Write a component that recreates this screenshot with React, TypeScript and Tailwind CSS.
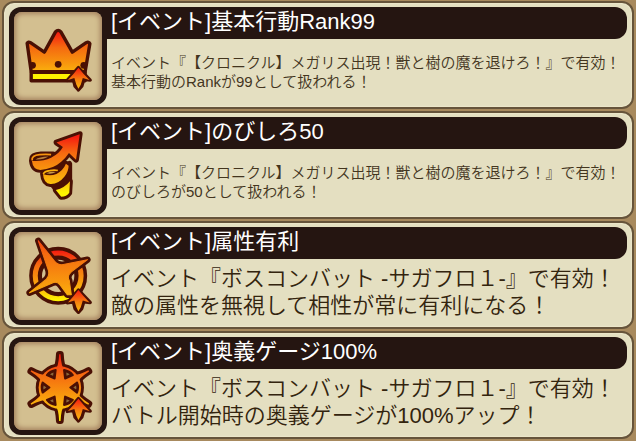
import type { ReactNode } from "react";

const INK = "#4a1004";

function Gradient({ id, y1, y2 }: { id: string; y1: number; y2: number }) {
  return (
    <linearGradient id={id} gradientUnits="userSpaceOnUse" x1="0" y1={y1} x2="0" y2={y2}>
      <stop offset="0" stopColor="#f51a10" />
      <stop offset="0.3" stopColor="#f56a10" />
      <stop offset="0.6" stopColor="#f8960e" />
      <stop offset="0.8" stopColor="#fbb80c" />
      <stop offset="1" stopColor="#fff200" />
    </linearGradient>
  );
}

function UpMark({ id, dy }: { id: string; dy: number }) {
  return (
    <g transform={`translate(0 ${dy})`}>
      <linearGradient id={id} x1="0" y1="0" x2="0" y2="1">
        <stop offset="0" stopColor="#f51a10" />
        <stop offset="0.6" stopColor="#f8860e" />
        <stop offset="1" stopColor="#fbb80c" />
      </linearGradient>
      <path
        d="M233 201 L268 238 L249 236 L243 256 L233 267 L223 256 L218 236 L200 239Z"
        fill={INK}
        stroke={INK}
        strokeWidth="10"
        strokeLinejoin="round"
      />
      <path
        d="M233 201 L248 219 L266 238 L246 232 L240 252 L233 264 L227 252 L221 232 L202 238 L219 219Z"
        fill={`url(#${id})`}
      />
    </g>
  );
}

function CrownIcon() {
  return (
    <svg viewBox="42 36 261 261" className="size-full" aria-hidden="true">
      <Gradient id="crown" y1={95} y2={250} />
      <g stroke={INK} strokeWidth="10" strokeLinejoin="round">
        <path
          d="M81 129 Q84 123 91 127 L132 155 L165 95 Q173 86 181 95 L215 155 L256 127 Q264 123 267 130 L253 213 L93 213Z"
          fill="url(#crown)"
        />
        <path d="M93 215 H253 V240 H93Z" fill="#fff200" />
      </g>
      <circle cx="173" cy="191" r="10" fill={INK} />
      <circle cx="97" cy="194" r="10" fill={INK} />
      <circle cx="249" cy="194" r="10" fill={INK} />
      <UpMark id="crownMark" dy={0} />
    </svg>
  );
}

function SpiralIcon() {
  const arrow =
    "M35 121 Q38 148 60 148 Q98 146 122 124 Q136 112 145 98 L166 118 L177 42 L108 67 L127 80 Q118 98 92 112 Q66 124 35 121Z";
  const band =
    "M68 160 Q70 188 90 190 Q114 191 132 168 Q144 152 144 136 L136 130 Q128 150 108 160 Q88 168 68 160Z";
  const tail = "M106 208 Q132 202 148 182 L146 216 Q138 228 122 228Z";
  return (
    <svg viewBox="-18 6 261 261" className="size-full" aria-hidden="true">
      <Gradient id="spiral" y1={48} y2={215} />
      <g fill={INK} stroke={INK} strokeWidth="17" strokeLinejoin="round">
        <path d={arrow} />
        <path d={band} />
        <path d={tail} />
        <path d="M36 118 Q34 104 62 102 L98 102 L70 118Z" />
        <path d="M70 158 L106 148 L146 130 L146 190 L110 208Z" />
      </g>
      <path d="M36 120 Q33 105 58 103 Q78 101 92 103" fill="none" stroke="#f8960e" strokeWidth="5" />
      <path d="M69 160 Q72 152 88 150 Q102 147 112 150" fill="none" stroke="#fbb00c" strokeWidth="5" />
      <path d="M46 117 Q56 109 84 108 Q70 118 46 117Z" fill="#b8803c" />
      <path d="M78 158 Q90 153 106 154 Q94 162 78 158Z" fill="#c89a48" />
      <g fill="url(#spiral)">
        <path d={arrow} />
        <path d={band} />
        <path d={tail} />
      </g>
    </svg>
  );
}

function ElementIcon() {
  const blade =
    "M54 32 L102 92 Q112 106 132 102 L200 88 L152 124 Q138 136 146 150 L152 192 L140 192 L118 162 Q108 150 94 158 L28 186 L78 146 Q90 134 82 114Z";
  return (
    <svg viewBox="-18 6 261 261" className="size-full" aria-hidden="true">
      <Gradient id="ring" y1={60} y2={206} />
      <Gradient id="blade" y1={-10} y2={260} />
      <circle cx="113" cy="136" r="67" fill="none" stroke={INK} strokeWidth="38" />
      <circle cx="113" cy="136" r="68" fill="none" stroke="url(#ring)" strokeWidth="15" />
      <path d={blade} fill={INK} stroke={INK} strokeWidth="19" strokeLinejoin="round" />
      <path d={blade} fill="url(#blade)" stroke="url(#blade)" strokeWidth="3" strokeLinejoin="round" />
      <g transform="translate(-60 -36)">
        <UpMark id="elementMark" dy={13} />
      </g>
    </svg>
  );
}

function ArtsIcon() {
  const spokes = [0, 60, 120, 180, 240, 300];
  const wedges = [30, 90, 150, 210, 270, 330];
  const spoke = "M164 124 Q174 116 176 78 L180 78 Q182 116 192 124Z";
  return (
    <svg viewBox="42 42 261 261" className="size-full" aria-hidden="true">
      <Gradient id="arts" y1={80} y2={275} />
      <mask id="artsShape" maskUnits="userSpaceOnUse" x="42" y="42" width="261" height="261">
        <circle cx="178" cy="177" r="63" fill="white" />
        {spokes.map((a) => (
          <path key={a} d={spoke} fill="white" transform={`rotate(${a} 178 177)`} />
        ))}
      </mask>
      <g fill={INK} stroke={INK} strokeLinejoin="round">
        <circle cx="178" cy="177" r="63" strokeWidth="17" />
        {spokes.map((a) => (
          <path key={a} d={spoke} strokeWidth="19" transform={`rotate(${a} 178 177)`} />
        ))}
      </g>
      <rect x="42" y="42" width="261" height="261" fill="url(#arts)" mask="url(#artsShape)" />
      {wedges.map((a) => (
        <g key={a} transform={`rotate(${a} 178 177)`}>
          <path
            d="M178 146 L193 126 Q178 120 163 126Z"
            fill={INK}
            stroke={INK}
            strokeWidth="6"
            strokeLinejoin="round"
          />
          <path d="M178 137 L184 129 Q178 127 172 129Z" fill="#8a6a3c" />
        </g>
      ))}
      <UpMark id="artsMark" dy={9} />
    </svg>
  );
}

type Ability = {
  title: string;
  lines: string[];
  large: boolean;
  icon: ReactNode;
};

const abilities: Ability[] = [
  {
    title: "[イベント]基本行動Rank99",
    lines: [
      "イベント『【クロニクル】メガリス出現！獣と樹の魔を退けろ！』で有効！",
      "基本行動のRankが99として扱われる！",
    ],
    large: false,
    icon: <CrownIcon />,
  },
  {
    title: "[イベント]のびしろ50",
    lines: [
      "イベント『【クロニクル】メガリス出現！獣と樹の魔を退けろ！』で有効！",
      "のびしろが50として扱われる！",
    ],
    large: false,
    icon: <SpiralIcon />,
  },
  {
    title: "[イベント]属性有利",
    lines: ["イベント『ボスコンバット -サガフロ１-』で有効！", "敵の属性を無視して相性が常に有利になる！"],
    large: true,
    icon: <ElementIcon />,
  },
  {
    title: "[イベント]奥義ゲージ100%",
    lines: ["イベント『ボスコンバット -サガフロ１-』で有効！", "バトル開始時の奥義ゲージが100%アップ！"],
    large: true,
    icon: <ArtsIcon />,
  },
];

function AbilityCard({ title, lines, large, icon }: Ability) {
  return (
    <li className="flex rounded-xl border-2 border-[#66543b] bg-[#e4dfc1] px-[5px] pt-1 pb-0.5 shadow-[inset_0_0_2px_#fffbe0]">
      <div className="size-[98px] shrink-0 rounded-xl rounded-tr-none bg-[#251511] p-[5px]">
        <div className="size-full rounded-lg bg-[#d3bf90] shadow-[inset_0_0_5px_2px_#a5825f]">{icon}</div>
      </div>
      <div className="flex min-w-0 grow flex-col">
        <h2 className="h-8 rounded-r-xl bg-[#251511] pl-1 text-[22px] leading-[30px] text-white">{title}</h2>
        <p
          className={
            large
              ? "flex grow flex-col justify-center pl-1 text-[22px] leading-[27px] font-[350] text-[#33240e]"
              : "flex grow flex-col justify-center pl-1 text-[15px] leading-[19px] font-[350] text-[#43351e]"
          }
        >
          {lines.map((line) => (
            <span key={line} className="whitespace-nowrap">
              {line}
            </span>
          ))}
        </p>
      </div>
    </li>
  );
}

export default function App() {
  return (
    <main className="min-h-screen bg-[#a88a5e] px-0.5 pt-px font-['Liberation_Sans','Noto_Sans_CJK_JP',sans-serif] font-normal [text-spacing-trim:space-all]">
      <ul className="flex flex-col gap-0.5">
        {abilities.map((ability) => (
          <AbilityCard key={ability.title} {...ability} />
        ))}
      </ul>
    </main>
  );
}
